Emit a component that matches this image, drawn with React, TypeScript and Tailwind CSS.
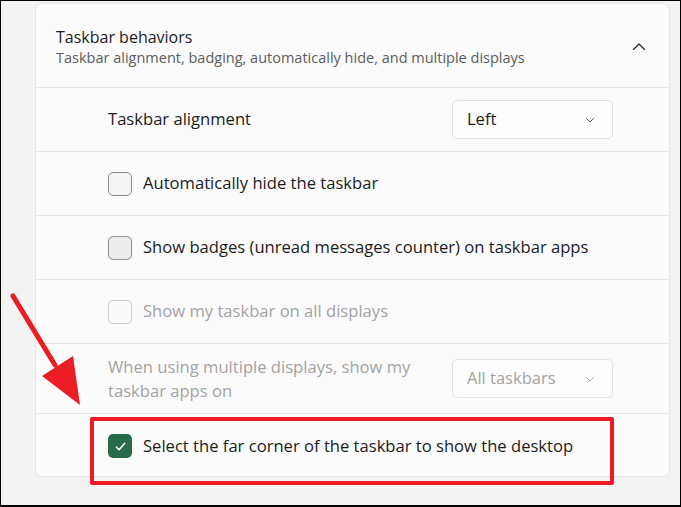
import React from 'react';

const font = { fontFamily: '"Open Sans", "Noto Sans", sans-serif' };

const ChevronDown = ({ className }: { className?: string }) => (
  <svg viewBox="0 0 12 12" className={className} fill="none" stroke="currentColor" strokeWidth="1" strokeLinecap="round" strokeLinejoin="round">
    <path d="M2.5 4.5 6 8l3.5-3.5" />
  </svg>
);

const Dropdown = ({ value, disabled }: { value: string; disabled?: boolean }) => (
  <div className="flex h-[39px] w-[161px] items-center justify-between rounded-[5px] border border-[#e3e3e3] bg-[#fdfdfd] pl-[14px] pr-[16px]">
    <span className={disabled ? 'text-[16.5px] text-[#a3a3a3]' : 'text-[16.5px] text-[#1b1b1b]'}>{value}</span>
    <ChevronDown className={disabled ? 'h-[12px] w-[12px] text-[#a8a8a8]' : 'h-[12px] w-[12px] text-[#5c5c5c]'} />
  </div>
);

const Checkbox = ({ state }: { state: 'off' | 'hatched' | 'disabled' | 'on' }) => {
  if (state === 'on') {
    return (
      <div className="flex h-[24px] w-[24px] items-center justify-center rounded-[5px] bg-[#286b4b]">
        <svg viewBox="0 0 16 16" className="h-[15px] w-[15px]" fill="none" stroke="white" strokeWidth="1.6" strokeLinecap="round" strokeLinejoin="round">
          <path d="M3.5 8.5 6.5 11.5 12.5 4.5" />
        </svg>
      </div>
    );
  }
  const cls =
    state === 'disabled'
      ? 'border-[#cdcdcd] bg-[#fafafa]'
      : state === 'hatched'
        ? 'border-[#8d8d8d] bg-[#ececec]'
        : 'border-[#8a8a8a] bg-[#f4f4f4]';
  return <div className={`h-[24px] w-[24px] rounded-[5px] border ${cls}`} />;
};

const CheckRow = ({ label, state, last }: { label: string; state: 'off' | 'hatched' | 'disabled' | 'on'; last?: boolean }) => (
  <div className={last ? 'flex h-[64px] items-center gap-[11px] pl-[72px]' : 'flex h-[64px] items-center gap-[11px] border-b border-[#e5e5e5] pl-[72px]'}>
    <Checkbox state={state} />
    <span className={state === 'disabled' ? 'text-[16.6px] text-[#a3a3a3]' : 'text-[16.6px] text-[#1b1b1b]'}>{label}</span>
  </div>
);

export default function App() {
  return (
    <div className="relative h-[507px] w-[681px] overflow-hidden border border-b-2 border-black bg-[#f3f3f3] pl-[34px] pt-[2px]" style={font}>
      <div className="h-[474px] w-[635px] rounded-[6px] border border-[#e5e5e5] bg-[#fbfbfb]">
        {/* Header */}
        <div className="flex h-[84px] items-center justify-between border-b border-[#e5e5e5] pl-[20px] pr-[22px] pt-[3px]">
          <div className="flex flex-col">
            <span className="text-[16px] leading-[22px] text-[#1b1b1b]">Taskbar behaviors</span>
            <span className="text-[14.5px] leading-[20px] text-[#5d5d5d]">Taskbar alignment, badging, automatically hide, and multiple displays</span>
          </div>
          <svg viewBox="0 0 16 16" className="h-[16px] w-[16px] text-[#1b1b1b]" fill="none" stroke="currentColor" strokeWidth="1.1" strokeLinecap="round" strokeLinejoin="round">
            <path d="M2.5 10.5 8 5l5.5 5.5" />
          </svg>
        </div>

        {/* Taskbar alignment */}
        <div className="flex h-[64px] items-center justify-between border-b border-[#e5e5e5] pl-[72px] pr-[56px]">
          <span className="text-[16.6px] text-[#1b1b1b]">Taskbar alignment</span>
          <Dropdown value="Left" />
        </div>

        <CheckRow label="Automatically hide the taskbar" state="off" />
        <CheckRow label="Show badges (unread messages counter) on taskbar apps" state="hatched" />
        <CheckRow label="Show my taskbar on all displays" state="disabled" />

        {/* Multiple displays */}
        <div className="flex h-[70px] items-center justify-between border-b border-[#e5e5e5] pl-[72px] pr-[56px]">
          <span className="text-[16.6px] leading-[24px] text-[#a3a3a3]">
            When using multiple displays, show my
            <br />
            taskbar apps on
          </span>
          <Dropdown value="All taskbars" disabled />
        </div>

        <CheckRow label="Select the far corner of the taskbar to show the desktop" state="on" last />
      </div>

      {/* Annotation: red box */}
      <div className="absolute left-[89px] top-[416px] h-[68px] w-[524px] rounded-[2px] border-[4px] border-[#ec1c24]" />

      {/* Annotation: red arrow */}
      <svg className="absolute left-0 top-0" width="681" height="507" viewBox="0 0 681 507">
        <line x1="12" y1="295" x2="54" y2="364" stroke="#ec1c24" strokeWidth="5" strokeLinecap="round" />
        <polygon points="41,375 72,355 79,404" fill="#ec1c24" />
      </svg>
    </div>
  );
}
